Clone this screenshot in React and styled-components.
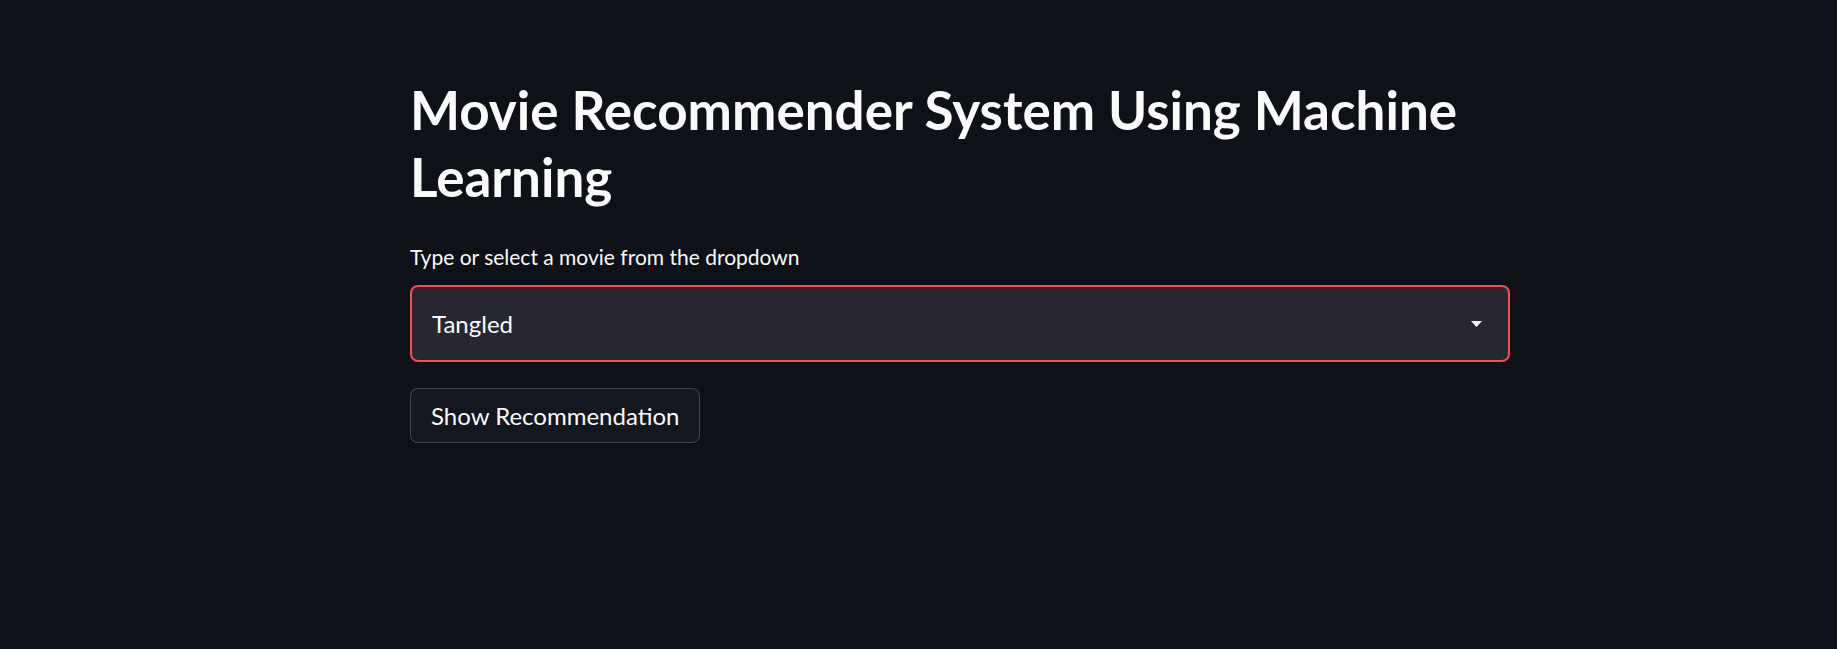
import React from "react";
import styled, { createGlobalStyle } from "styled-components";

const Global = createGlobalStyle`
  html, body { margin: 0; padding: 0; background: #0e1117; }
  body { font-family: Lato, "Noto Sans", sans-serif; color: #fafafa; }
  * { box-sizing: border-box; }
`;

const Page = styled.div`
  min-height: 649px;
  background: #0e1117;
  padding-top: 76px;
`;

const Main = styled.main`
  margin-left: 410px;
  width: 1100px;
  display: flex;
  flex-direction: column;
  align-items: flex-start;
`;

const Title = styled.h1`
  margin: 0;
  font-size: 53px;
  line-height: 67px;
  font-weight: 700;
  color: #fafafa;
`;

const Label = styled.label`
  margin-top: 33px;
  font-size: 21px;
  line-height: 28px;
  color: #fafafa;
`;

const Select = styled.div`
  margin-top: 14px;
  width: 100%;
  height: 77px;
  background: #262730;
  border: 2px solid #ff4b4b;
  border-radius: 8px;
  display: flex;
  align-items: center;
  justify-content: space-between;
  padding: 0 26px 0 20px;
`;

const Value = styled.span`
  font-size: 24px;
  color: #fafafa;
`;

const Button = styled.button`
  margin-top: 26px;
  height: 55px;
  padding: 0 20px;
  background: #131720;
  border: 1px solid rgba(250, 250, 250, 0.2);
  border-radius: 8px;
  font-family: inherit;
  font-size: 24px;
  color: #fafafa;
  cursor: pointer;
`;

export default function App() {
  return (
    <Page>
      <Global />
      <Main>
        <Title>Movie Recommender System Using Machine Learning</Title>
        <Label>Type or select a movie from the dropdown</Label>
        <Select>
          <Value>Tangled</Value>
          <svg width="11" height="6" viewBox="0 0 11 6">
            <path d="M0 0 L11 0 L5.5 6 Z" fill="#fafafa" />
          </svg>
        </Select>
        <Button>Show Recommendation</Button>
      </Main>
    </Page>
  );
}
